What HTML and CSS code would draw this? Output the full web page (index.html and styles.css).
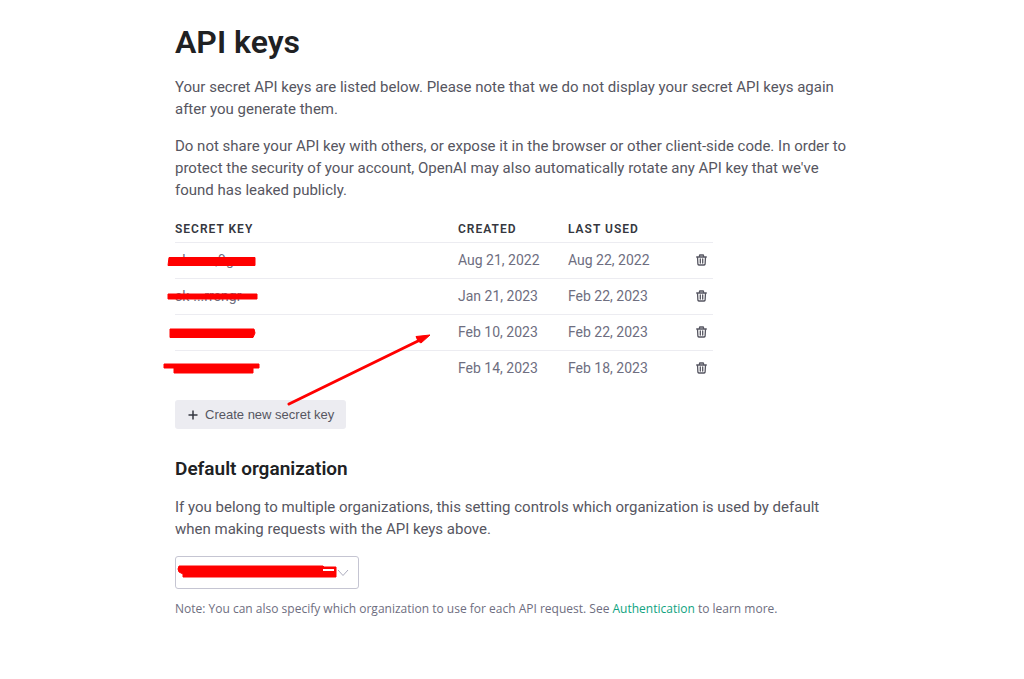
FILE: index.html
```html
<!DOCTYPE html>
<html lang="en">
<head>
<meta charset="utf-8">
<meta name="viewport" content="width=device-width, initial-scale=1">
<title>API keys</title>
<link rel="stylesheet" href="styles.css">
</head>
<body>
<svg class="symbols" aria-hidden="true">
  <symbol id="trash" viewBox="0 0 11 12">
    <path d="M.7 3h9.600M3.500 3V1.500Q3.500 1 4 1h3Q7.500 1 7.500 1.500V3M1.500 3l.4 7.200Q2 11 2.800 11h5.400q.8 0 .9-.8L9.500 3M4.300 5v4M6.700 5v4" fill="none" stroke="currentColor" stroke-width="1.300" stroke-linecap="round"/>
  </symbol>
</svg>
<main class="page">
  <h1 class="title">API keys</h1>
  <p class="text">Your secret API keys are listed below. Please note that we do not display your secret API keys again<br>after you generate them.</p>
  <p class="text">Do not share your API key with others, or expose it in the browser or other client-side code. In order to<br>protect the security of your account, OpenAI may also automatically rotate any API key that we've<br>found has leaked publicly.</p>

  <table class="keys">
    <thead>
      <tr><th class="col-key">Secret key</th><th class="col-created">Created</th><th class="col-used">Last used</th><th></th></tr>
    </thead>
    <tbody>
      <tr>
        <td><span class="secret">sk-......,9g<svg class="mark" viewBox="0 0 100 18"><path d="M6 4.500H92V12.500H5Z"/></svg></span></td>
        <td>Aug 21, 2022</td><td>Aug 22, 2022</td>
        <td class="action"><button class="delete" type="button" aria-label="Delete key"><svg class="icon"><use href="#trash"/></svg></button></td>
      </tr>
      <tr>
        <td><span class="secret">sk-...rrengr<svg class="mark" viewBox="0 0 100 18"><path d="M5 5H94V10H5Z"/></svg></span></td>
        <td>Jan 21, 2023</td><td>Feb 22, 2023</td>
        <td class="action"><button class="delete" type="button" aria-label="Delete key"><svg class="icon"><use href="#trash"/></svg></button></td>
      </tr>
      <tr>
        <td><span class="secret"><svg class="mark" viewBox="0 0 100 18"><path d="M7 4H91L92 8L90 12.500H7Z"/></svg></span></td>
        <td>Feb 10, 2023</td><td>Feb 22, 2023</td>
        <td class="action"><button class="delete" type="button" aria-label="Delete key"><svg class="icon"><use href="#trash"/></svg></button></td>
      </tr>
      <tr>
        <td><span class="secret"><svg class="mark" viewBox="0 0 100 18"><path d="M1 3H96V7H90V12H11V7H1Z"/></svg></span></td>
        <td>Feb 14, 2023</td><td>Feb 18, 2023</td>
        <td class="action"><button class="delete" type="button" aria-label="Delete key"><svg class="icon"><use href="#trash"/></svg></button></td>
      </tr>
    </tbody>
  </table>

  <div class="create-wrap">
    <button class="create" type="button"><svg class="plus" viewBox="0 0 10 10" aria-hidden="true"><path d="M5 .5v9M.5 5h9"/></svg>Create new secret key</button>
    <svg class="arrow" viewBox="0 0 144 72" aria-hidden="true"><path class="arrow-line" d="M2 70L131 7"/><path class="arrow-head" d="M143 1L134 9L131 7L129 2.500Z"/></svg>
  </div>

  <h2 class="subtitle">Default organization</h2>
  <p class="text">If you belong to multiple organizations, this setting controls which organization is used by default<br>when making requests with the API keys above.</p>
  <div class="org">
    <select class="org-select" aria-label="Default organization"><option></option></select>
    <svg class="chevron" viewBox="0 0 12 8" aria-hidden="true"><path d="M1 1l5 5.500L11 1"/></svg>
    <svg class="org-mark" viewBox="0 0 162 14" aria-hidden="true"><path d="M2 1H146L147 2H159V12H6V9L2 7Q0 4 2 1Z"/><path class="gap" d="M146 5h11"/></svg>
  </div>
  <p class="note">Note: You can also specify which organization to use for each API request. See <a class="link" href="#">Authentication</a> to learn more.</p>
</main>
</body>
</html>
```
FILE: styles.css
```css
* { box-sizing: border-box; }
body {
  margin: 0;
  background: #fff;
  color: #565661;
  font-family: Roboto, "Liberation Sans", sans-serif;
  font-size: 15px;
  line-height: 22px;
}
.symbols { position: absolute; width: 0; height: 0; }
.page { max-width: 868px; padding: 24px 0 24px 175px; }
.title { margin: 0 0 16px; color: #202123; font-size: 32px; line-height: 36px; font-weight: 600; }
.text { margin: 0 0 15px; }
.keys { width: 538px; max-width: 100%; border-collapse: collapse; table-layout: fixed; font-size: 14px; line-height: 20px; }
.keys th { height: 26px; padding: 0; color: #353740; font-size: 12px; font-weight: 600; letter-spacing: 1px; text-align: left; text-transform: uppercase; }
.keys td { height: 36px; padding: 0; border-top: 1px solid #ececf1; color: #6e6e80; }
.col-key { width: 283px; }
.col-created, .col-used { width: 110px; }
.secret { position: relative; display: block; height: 20px; }
.mark { position: absolute; left: -12px; top: 3px; width: 100px; height: 18px; fill: #f00; stroke: #f00; stroke-width: 1; stroke-linejoin: round; }
.keys .action { text-align: right; }
.delete { display: flex; margin-left: auto; padding: 5px 6px; border: 0; background: none; color: #565661; }
.icon { width: 11px; height: 12px; }
.create-wrap { position: relative; margin-top: 14px; }
.create { display: flex; align-items: center; gap: 7px; height: 29px; padding: 0 12px 0 13px; border: 0; border-radius: 3px; background: #ececf1; color: #565661; font-family: "Liberation Sans", Arial, sans-serif; font-size: 13px; line-height: 20px; }
.plus { width: 10px; height: 10px; fill: none; stroke: #353740; stroke-width: 1.500; }
.arrow { position: absolute; left: 112px; bottom: 23px; width: 144px; height: 72px; pointer-events: none; }
.arrow-line { stroke: #f00; stroke-width: 3; stroke-linecap: round; }
.arrow-head { fill: #f00; stroke: #f00; }
.subtitle { margin: 28px 0 15px; color: #202123; font-size: 19px; line-height: 24px; font-weight: 600; }
.org { position: relative; width: 184px; margin-top: 16px; }
.org-select { display: block; width: 100%; height: 33px; border: 1px solid #c5c5d2; border-radius: 3px; background: #fff; appearance: none; }
.chevron { position: absolute; right: 10px; top: 13px; width: 12px; height: 8px; fill: none; stroke: #acacbe; pointer-events: none; }
.org-mark { position: absolute; left: 2px; top: 9px; width: 162px; height: 14px; fill: #f00; stroke: #f00; pointer-events: none; }
.org-mark .gap { stroke: #fff; stroke-width: 2; }
.note { margin: 10px 0 0; color: #6e6e80; font-family: "Open Sans", "Liberation Sans", sans-serif; font-size: 12px; line-height: 20px; }
.link { color: #10a37f; font-weight: 500; text-decoration: none; }
```
